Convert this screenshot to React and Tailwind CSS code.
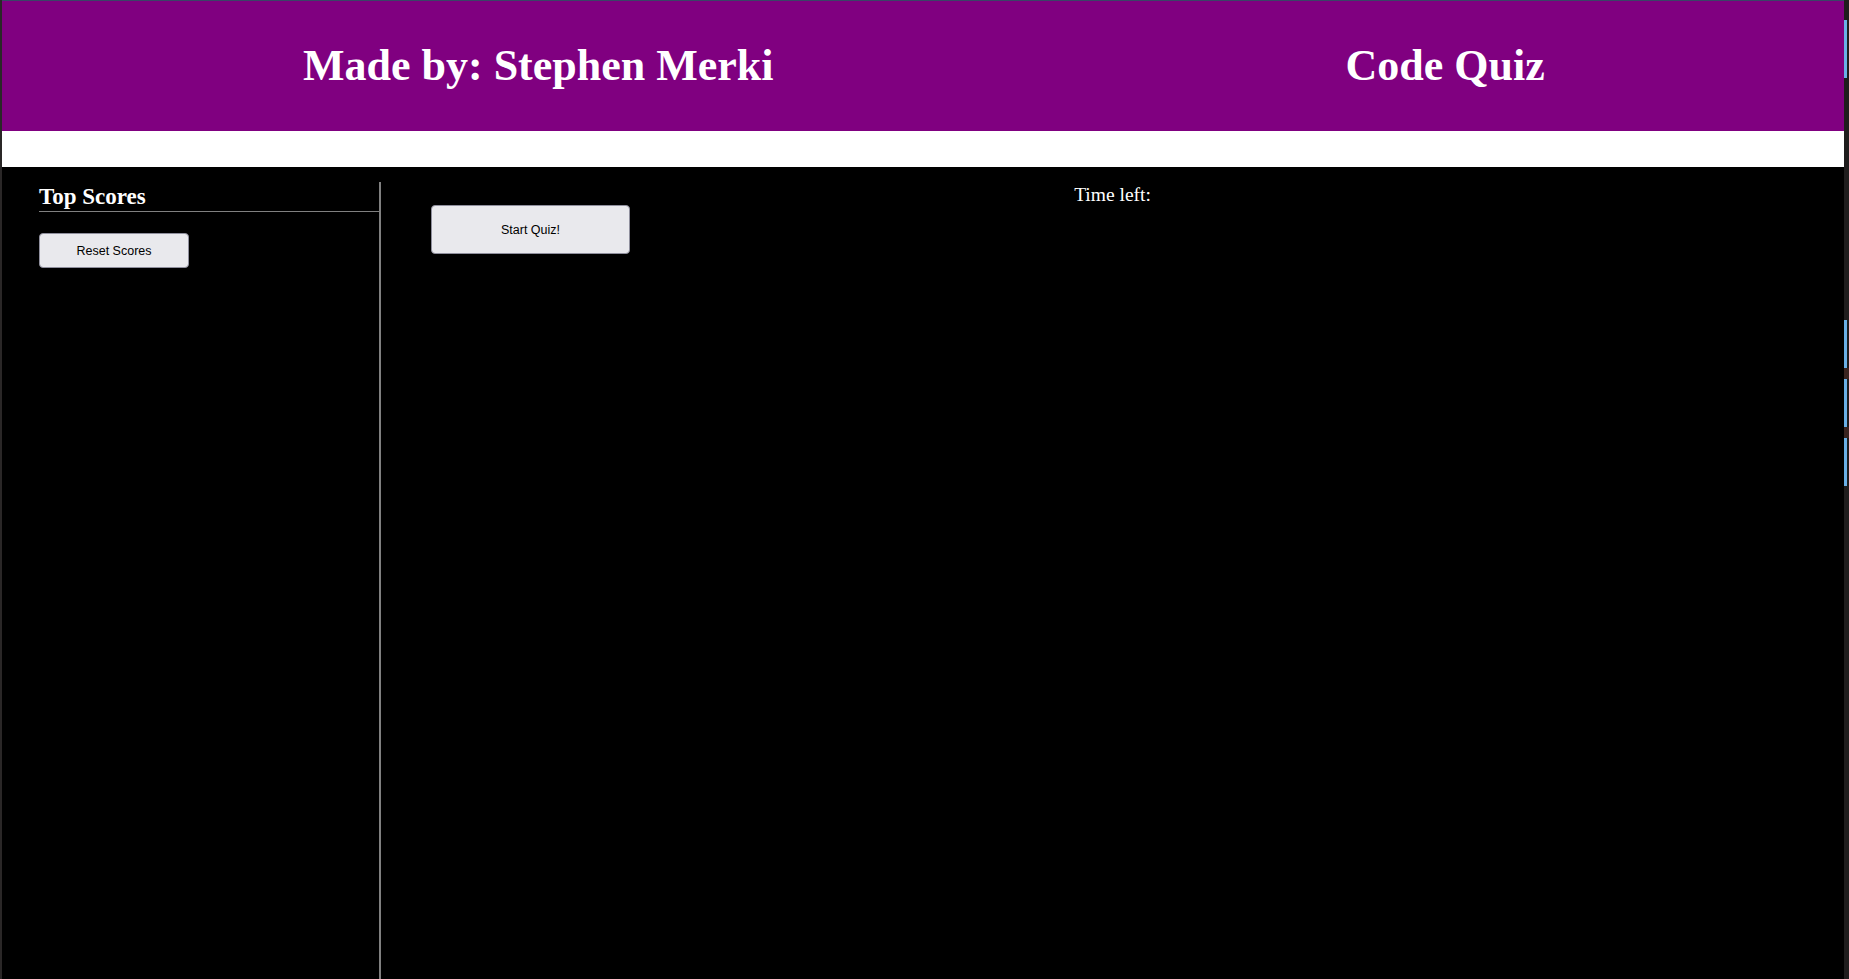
import React from 'react';

const serif = "font-['Liberation_Serif','Times_New_Roman',serif]";
const sans = "font-['Liberation_Sans',Arial,sans-serif]";

const App = () => {
  return (
    <div className="flex h-[979px] w-[1849px] overflow-hidden bg-black">
      {/* window edge */}
      <div className="w-[2px] bg-[#2a2727]" />

      <div className="flex flex-1 flex-col">
        <div className="h-px bg-[#3a4466]" />

        {/* Header */}
        <header className={`flex h-[130px] items-start bg-[#800080] pt-[40px] text-white ${serif}`}>
          <h1 className="ml-[301px] text-[44px] font-bold leading-[50px]">Made by: Stephen Merki</h1>
          <h1 className="ml-[572px] text-[44px] font-bold leading-[50px]">Code Quiz</h1>
        </header>

        <div className="h-[36px] bg-white" />

        {/* Body */}
        <div className="mt-[15px] flex flex-1">
          <aside className="w-[379px] border-r-2 border-[#808080] pl-[37px] pt-[2px]">
            <h2 className={`border-b border-[#808080] pb-px text-[23px] font-bold leading-[26px] text-white ${serif}`}>
              Top Scores
            </h2>
            <button
              className={`mt-[21px] h-[35px] w-[150px] rounded-[4px] border border-[#8f8f9d] bg-[#e9e9ed] pt-px text-[12.5px] text-black ${sans}`}
            >
              Reset Scores
            </button>
          </aside>

          <main className="flex-1 pt-[2px]">
            <p className={`text-center text-[19.5px] leading-[21px] text-white ${serif}`}>Time left:</p>
            <button
              className={`ml-[50px] h-[49px] w-[199px] rounded-[4px] border border-[#8f8f9d] bg-[#e9e9ed] pt-[2px] text-[12.5px] text-black ${sans}`}
            >
              Start Quiz!
            </button>
          </main>
        </div>
      </div>

      {/* editor scrollbar strip */}
      <div className="flex w-[5px] flex-col bg-[#1f1d1d]">
        <div className="mt-[20px] h-[58px] w-[3px] bg-[#6ab0e6]" />
        <div className="mt-[242px] h-[48px] w-[3px] bg-[#6ab0e6]" />
        <div className="h-[11px] w-[5px] bg-[#3a2420]" />
        <div className="h-[48px] w-[3px] bg-[#6ab0e6]" />
        <div className="h-[11px] w-[5px] bg-[#3a2420]" />
        <div className="h-[48px] w-[3px] bg-[#6ab0e6]" />
      </div>
    </div>
  );
};

export default App;
